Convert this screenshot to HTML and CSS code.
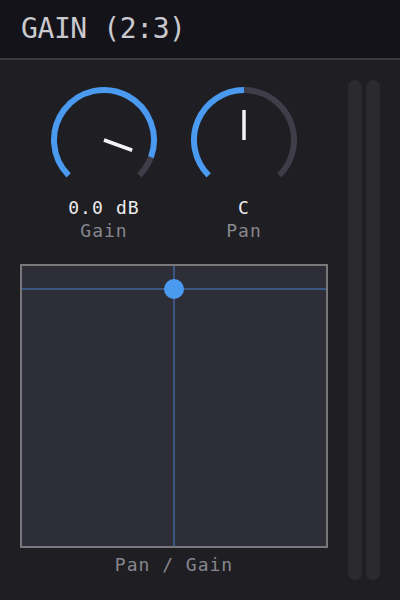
FILE: index.html
```html
<!DOCTYPE html>
<html lang="en">
<head>
<meta charset="utf-8">
<title>Gain</title>
<link rel="stylesheet" href="styles.css">
</head>
<body>
<div class="header">GAIN (2:3)</div>
<div class="main">
  <div class="controls">
    <div class="knobs">
      <div class="knob">
        <svg class="dial" width="110" height="110" viewBox="0 0 110 110">
          <!-- arc runs from -135deg to +135deg; value fill up to 110deg -->
          <path class="track" d="M 101.98 72.10 A 50 50 0 0 1 90.36 90.36"/>
          <path class="fill" d="M 19.64 90.36 A 50 50 0 1 1 101.98 72.10"/>
          <line class="pointer" x1="55" y1="55" x2="83.19" y2="65.26"/>
        </svg>
        <div class="value">0.0 dB</div>
        <div class="label">Gain</div>
      </div>
      <div class="knob">
        <svg class="dial" width="110" height="110" viewBox="0 0 110 110">
          <path class="track" d="M 55 5 A 50 50 0 0 1 90.36 90.36"/>
          <path class="fill" d="M 19.64 90.36 A 50 50 0 0 1 55 5"/>
          <line class="pointer" x1="55" y1="55" x2="55" y2="25"/>
        </svg>
        <div class="value">C</div>
        <div class="label">Pan</div>
      </div>
    </div>
    <div class="pad">
      <div class="cross-h" style="top: 23px"></div>
      <div class="cross-v" style="left: 152px"></div>
      <div class="handle" style="left: 152px; top: 23px"></div>
    </div>
    <div class="caption">Pan / Gain</div>
  </div>
  <div class="meters">
    <div class="meter"></div>
    <div class="meter"></div>
  </div>
</div>
</body>
</html>
```

FILE: styles.css
```css
* {
  box-sizing: border-box;
}

html, body {
  margin: 0;
  padding: 0;
}

body {
  width: 400px;
  height: 600px;
  background: #1f1e23;
  font-family: "DejaVu Sans Mono", "Liberation Mono", monospace;
  overflow: hidden;
}

.header {
  height: 60px;
  padding-left: 21px;
  background: #141319;
  border-bottom: 2px solid #3a3a3f;
  color: #c9c9ce;
  font-size: 28px;
  line-height: 58px;
  letter-spacing: -0.4px;
}

.main {
  display: flex;
  height: 540px;
  padding: 20px;
}

.controls {
  width: 308px;
  display: flex;
  flex-direction: column;
  padding-top: 5px;
}

.knobs {
  display: flex;
  justify-content: center;
  gap: 30px;
}

.knob {
  width: 110px;
  display: flex;
  flex-direction: column;
  align-items: center;
}

.dial {
  display: block;
}

.dial path {
  fill: none;
  stroke-width: 6;
}

.dial .fill {
  stroke: #4a9af0;
}

.dial .track {
  stroke: #3e3e48;
}

.dial .pointer {
  stroke: #f4f4f4;
  stroke-width: 3.5;
}

.value {
  margin-top: 3px;
  color: #ececee;
  font-size: 18px;
  line-height: 20px;
  letter-spacing: 1.1px;
}

.label {
  margin-top: 3px;
  color: #87878f;
  font-size: 18px;
  line-height: 20px;
  letter-spacing: 1px;
}

.pad {
  position: relative;
  margin-top: 23px;
  height: 284px;
  background: #2e2e38;
  border: 2px solid #78787a;
}

.cross-h {
  position: absolute;
  left: 0;
  right: 0;
  height: 2px;
  margin-top: -1px;
  background: #3a5784;
}

.cross-v {
  position: absolute;
  top: 0;
  bottom: 0;
  width: 2px;
  margin-left: -1px;
  background: #3a5784;
}

.handle {
  position: absolute;
  width: 20px;
  height: 20px;
  margin: -10px 0 0 -10px;
  border-radius: 50%;
  background: #4a9af0;
}

.caption {
  margin-top: 7px;
  text-align: center;
  color: #87878f;
  font-size: 18px;
  line-height: 20px;
  letter-spacing: 1px;
}

.meters {
  display: flex;
  gap: 4px;
  margin-left: 20px;
}

.meter {
  width: 14px;
  height: 500px;
  border-radius: 7px;
  background: #2a2a2f;
}
```
